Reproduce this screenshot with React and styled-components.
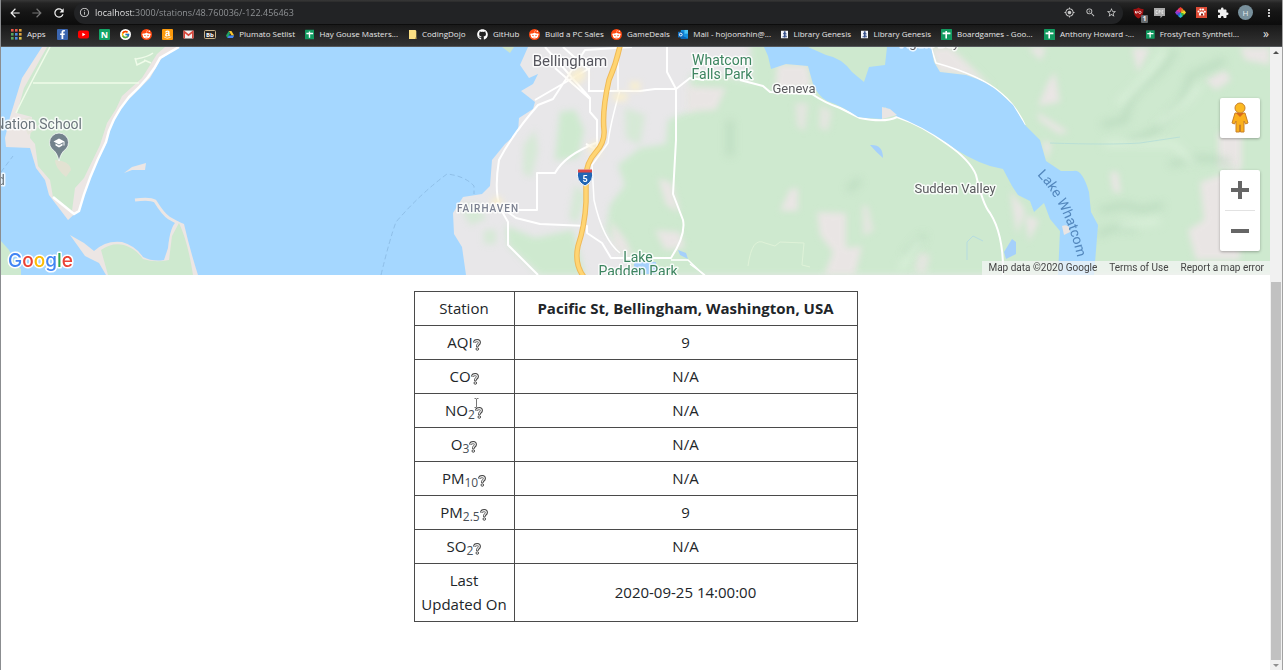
import React from "react";
import styled, { createGlobalStyle, css } from "styled-components";
import {
  MdArrowBack, MdArrowForward, MdRefresh, MdInfoOutline, MdZoomIn, MdStarBorder,
  MdMyLocation, MdExtension, MdMoreVert, MdSchool,
} from "react-icons/md";
import { FaGithub, FaRedditAlien, FaFacebookF, FaAmazon } from "react-icons/fa";
import { FcGoogle } from "react-icons/fc";

const ui = `"Open Sans", "Noto Sans", sans-serif`;

const GlobalStyle = createGlobalStyle`
  * { box-sizing: border-box; }
  body { margin: 0; background: #fff; color: #212529; font-family: ${ui}; }
  button { border: 0; padding: 0; background: none; color: inherit; font: inherit; cursor: pointer; }
  a { color: inherit; text-decoration: none; }
`;

const Browser = styled.div`
  display: flex;
  flex-direction: column;
  min-height: 100vh;
  border-left: 1px solid #8b8d90;
  border-right: 1px solid #a2a2a2;
`;

/* ---------- Toolbar ---------- */

const Toolbar = styled.header`
  display: flex;
  align-items: center;
  height: 25px;
  padding: 0 8px 0 7px;
  background: linear-gradient(#383838, #242424 3px, #151515 12px, #0c0c0c);
  color: #f1f1f1;
`;

const NavButton = styled.button`
  display: flex;
  width: 14px;
  height: 14px;
  margin-right: 8px;
  align-items: center;
  justify-content: center;
  font-size: 14px;
  color: ${(p) => (p.$dim ? "#777" : "#f1f1f1")};
`;

const AddressBar = styled.div`
  display: flex;
  flex: 1;
  align-items: center;
  gap: 5px;
  height: 22px;
  padding: 0 6px 0 5px;
  border-radius: 11px;
  background: #222325;
  color: #c8c8c8;
  font-size: 11px;
`;

const UrlInput = styled.input`
  flex: 1;
  min-width: 0;
  height: 20px;
  padding: 0;
  border: 0;
  outline: 0;
  font: 9px/20px ${ui};
  color: transparent;
  background: linear-gradient(90deg, #f2f2f2 39px, #94979a 39px);
  background-clip: text;
  -webkit-background-clip: text;
`;

const BarButton = styled.button`
  display: flex;
  width: 11px;
  height: 11px;
  margin-left: 5px;
  align-items: center;
  justify-content: center;
  font-size: 11px;
`;

const Extensions = styled.div`
  display: flex;
  align-items: center;
  gap: 10px;
  margin-left: 10px;
`;

const ExtButton = styled.button`
  display: flex;
  position: relative;
  width: 11px;
  height: 12px;
  align-items: center;
  justify-content: center;
  font-size: 12px;
  svg { flex: none; }
`;

const Count = styled.span`
  position: absolute;
  right: -4px;
  bottom: -4px;
  width: 7px;
  height: 8px;
  border-radius: 1px;
  background: #666a6d;
  font-size: 7px;
  font-weight: 700;
  line-height: 8px;
`;

const Avatar = styled.button`
  width: 15px;
  height: 15px;
  border-radius: 50%;
  background: #78909c;
  color: #e4eaed;
  font-size: 8px;
  line-height: 15px;
`;

/* ---------- Bookmarks ---------- */

const Bookmarks = styled.nav`
  display: flex;
  align-items: center;
  gap: 10px;
  height: 22px;
  padding: 0 13px 3px 10px;
  overflow: hidden;
  border-bottom: 1px solid #55585c;
  background: linear-gradient(#191919, #333);
  color: #e6e6e6;
`;

const Bookmark = styled.a`
  display: flex;
  flex: none;
  align-items: center;
  gap: 5px;
  font-size: 8px;
  line-height: 12px;
  white-space: nowrap;
  ${(p) => p.$w && css`width: ${p.$w}px;`}
`;

const More = styled.button`
  margin-left: auto;
  font-size: 12px;
  line-height: 12px;
`;

const Tile = styled.span`
  display: flex;
  flex: none;
  width: 11px;
  height: 11px;
  align-items: center;
  justify-content: center;
  overflow: hidden;
  border-radius: ${(p) => (p.$round ? "50%" : "1px")};
  background: ${(p) => p.$bg || "transparent"};
  color: #fff;
  font-size: ${(p) => p.$size || 9}px;
  font-weight: 700;
  line-height: 11px;
`;

const AppsIcon = () => (
  <svg width="11" height="11" viewBox="0 0 11 11" aria-hidden="true">
    {["#e8574a", "#e8574a", "#e0a33c", "#58a55c", "#4d8ce0", "#e0a33c", "#58a55c", "#4d8ce0", "#d8c24c"].map((c, i) => (
      <rect key={i} x={(i % 3) * 4} y={Math.floor(i / 3) * 4} width="2.6" height="2.6" fill={c} />
    ))}
  </svg>
);
const YoutubeIcon = () => (
  <svg width="11" height="11" viewBox="0 0 11 11"><rect y="1.5" width="11" height="8" rx="2" fill="#f00" /><path d="M4.4 3.8v3.4l3-1.7z" fill="#fff" /></svg>
);
const MailIcon = () => (
  <svg width="11" height="11" viewBox="0 0 11 11"><rect x=".5" y="1.5" width="10" height="8" rx="1" fill="#f3eeee" /><path d="M1.2 9.5V2.6l4.3 3.5 4.3-3.5v6.9" fill="none" stroke="#d9453a" strokeWidth="1.6" /></svg>
);
const DriveIcon = () => (
  <svg width="11" height="11" viewBox="0 0 11 11"><path d="M3.7.8h3.6L11 7H7.4z" fill="#fbc72d" /><path d="M3.7.8L0 7l1.8 3.2L5.5 4z" fill="#1fa463" /><path d="M1.8 10.2L3.6 7H11l-1.8 3.2z" fill="#4387f5" /></svg>
);
const SheetIcon = () => (
  <svg width="11" height="11" viewBox="0 0 11 11"><rect width="11" height="11" rx=".6" fill="#129a60" /><path d="M1.6 4.4h7.8M5.2 2v7.4" stroke="#fff" strokeWidth="1.6" /></svg>
);
const FolderIcon = () => (
  <svg width="9" height="11" viewBox="0 0 9 11"><path d="M1 1h6.5l.8 1v8H1z" fill="#fbdf83" /><path d="M7 8.6h1.3V10H7z" fill="#c9a64c" /></svg>
);
const OutlookIcon = () => (
  <svg width="11" height="11" viewBox="0 0 11 11"><path d="M3 .6h8V10H3z" fill="#1490df" /><path d="M7 .6h4v4H7z" fill="#50c6f5" /><path d="M3 6l8 4H3z" fill="#0a64b8" /><rect y="2.6" width="6" height="6" fill="#0f6cbd" /><circle cx="3" cy="5.6" r="1.5" fill="none" stroke="#fff" /></svg>
);
const LibraryIcon = () => (
  <svg width="11" height="11" viewBox="0 0 11 11"><path d="M0 0h11v11H0z" fill="#f5f7fb" /><path d="M4 2h3M3 4.3h5M4 6.4h4M2.3 8.8h6.4M5.5.8V10" stroke="#24407f" strokeWidth="1.4" /></svg>
);
const ShieldIcon = () => (
  <svg width="11" height="12" viewBox="0 0 11 12"><path d="M5.5.5C7 1.6 8.7 2 10.5 2c0 4.5-1 7.500-5 9.500C1.500 9.500.5 6.500.5 2 2.300 2 4 1.600 5.500.5z" fill="#a01212" /><path d="M2.500 4v2h1.600V4M6.800 4.200a1.200 1.200 0 1 0 .1 0" stroke="#fff" strokeWidth=".8" fill="none" /></svg>
);
const ChatIcon = () => (
  <svg width="11" height="12" viewBox="0 0 11 12"><path d="M0 1h11v8H8.500l-2 2.200V9H0z" fill="#aaa" /><path d="M2 3.500h1.700M2 3.500v3h1.700M5 6.500v-3h1.200v1.400H5M9.300 3.500H7.900v3h1.400M8 5h1" stroke="#eee" strokeWidth=".7" fill="none" /></svg>
);
const WheelIcon = () => (
  <svg width="11" height="11" viewBox="-5.500 -5.500 11 11">
    {["#f03b2e", "#ef8b1f", "#f2db2c", "#3fb83e", "#2bb9c9", "#2a62dd", "#8d3ad0", "#e13c9c"].map((c, i) => (
      <path key={c} d={i % 2 ? "M0 0L-2-4H2z" : "M0 0L-2-4L0-5.500L2-4z"} fill={c} transform={`rotate(${i * 45})`} />
    ))}
  </svg>
);
const PawIcon = () => (
  <svg width="11" height="11" viewBox="0 0 11 11"><path d="M0 0h11v11H0z" fill="#dd4b36" /><g fill="#fff"><circle cx="2.500" cy="4.500" r="1" /><circle cx="4.500" cy="2.500" r="1.100" /><circle cx="7" cy="2.600" r="1.100" /><circle cx="8.900" cy="4.700" r="1" /><path d="M5.700 4.500c2 0 3 2 2.600 4H3c-.6-2 .7-4 2.700-4z" /></g><path d="M5 6.500h2v2H5z" fill="#7b2018" /></svg>
);
const Reddit = () => <Tile $round $bg="#ff4a12"><FaRedditAlien /></Tile>;

const bookmarks = [
  { name: "Apps", text: "Apps", icon: <AppsIcon />, w: 36 },
  { name: "Facebook", icon: <Tile $bg="#3b66b0"><FaFacebookF /></Tile> },
  { name: "YouTube", icon: <YoutubeIcon /> },
  { name: "Notes", icon: <Tile $bg="#12a566">N</Tile> },
  { name: "Google", icon: <Tile $round $bg="#fff"><FcGoogle /></Tile> },
  { name: "Reddit", icon: <Reddit /> },
  { name: "Amazon", icon: <Tile $bg="#fd9a0b"><FaAmazon /></Tile> },
  { name: "Gmail", icon: <MailIcon /> },
  { name: "Blackboard", w: 12, icon: <svg width="12" height="11" viewBox="0 0 12 11"><rect x=".5" y="1.500" width="11" height="8" rx="1" fill="#292420" stroke="#c8b48a" /><text x="6" y="7.800" textAnchor="middle" fontSize="6" fontWeight="700" fill="#fff">Bb</text></svg> },
  { name: "Plumato Setlist", text: "Plumato Setlist", icon: <DriveIcon />, w: 69 },
  { name: "Masters", text: "Hay Gouse Masters...", icon: <SheetIcon />, w: 93 },
  { name: "CodingDojo", text: "CodingDojo", icon: <FolderIcon />, w: 59 },
  { name: "GitHub", text: "GitHub", icon: <Tile $size={11}><FaGithub /></Tile>, w: 42 },
  { name: "Build a PC Sales", text: "Build a PC Sales", icon: <Reddit />, w: 72 },
  { name: "GameDeals", text: "GameDeals", icon: <Reddit />, w: 57 },
  { name: "Mail", text: "Mail - hojoonshin@...", icon: <OutlookIcon />, w: 93 },
  { name: "Library", text: "Library Genesis", icon: <LibraryIcon />, w: 70 },
  { name: "Library 2", text: "Library Genesis", icon: <LibraryIcon />, w: 70 },
  { name: "Boardgames", text: "Boardgames - Goo...", icon: <SheetIcon />, w: 93 },
  { name: "Howard", text: "Anthony Howard -...", icon: <SheetIcon />, w: 92 },
  { name: "FrostyTech", text: "FrostyTech Syntheti...", icon: <SheetIcon />, w: 93 },
];

/* ---------- Viewport ---------- */

const Viewport = styled.div`
  display: flex;
  flex: 1;
`;

const Page = styled.main`
  flex: 1;
  min-width: 0;
`;

const Scrollbar = styled.div`
  display: flex;
  flex-direction: column;
  width: 12px;
  padding: 0 1px;
  background: #f1f1f1;
`;

const ScrollArrow = styled.span`
  display: flex;
  height: 10px;
  align-items: center;
  justify-content: center;
`;
const ScrollGap = styled.div`flex: 225;`;
const Thumb = styled.div`
  flex: 378;
  background: #c1c1c1;
`;

/* ---------- Map ---------- */

const MapFrame = styled.section`
  position: relative;
  height: 228px;
  overflow: hidden;
  background: #a5d7ff;
`;

const MapCanvas = styled.svg`
  display: block;
  width: 100%;
  height: 100%;
  font-family: Roboto, sans-serif;
`;

const MapControls = styled.div`
  position: absolute;
  top: 51px;
  right: 10px;
  display: flex;
  flex-direction: column;
  gap: 32px;
`;

const ControlCard = styled.div`
  display: flex;
  flex-direction: column;
  align-items: center;
  width: 40px;
  border-radius: 2px;
  background: #fff;
  box-shadow: 0 1px 3px rgba(0, 0, 0, 0.3);
`;

const ControlButton = styled.button`
  display: flex;
  width: 40px;
  height: 40px;
  align-items: center;
  justify-content: center;
`;

const Rule = styled.span`
  width: 30px;
  height: 1px;
  background: #e2e2e2;
`;

const Attribution = styled.footer`
  position: absolute;
  right: 0;
  bottom: 0;
  display: flex;
  gap: 12px;
  height: 14px;
  padding: 0 6px;
  background: rgba(245, 245, 245, 0.72);
  color: #444;
  font: 10px/14px Roboto, sans-serif;
  white-space: nowrap;
`;

const Halo = ({ size = 14, fill = "#5a5a5e", weight = 400, children, ...rest }) => (
  <text fontSize={size} fill={fill} fontWeight={weight} stroke="#fff" strokeOpacity=".8" strokeWidth="3" strokeLinejoin="round" paintOrder="stroke" textAnchor="middle" {...rest}>
    {children}
  </text>
);

const LAND = "M528 47L520 65L529 78L538 74L533 84L521 91L535 102L533 109L519 118L518 132L505 144L492 160L490 186L482 194L463 197L453 213L454 234L462 247L466 275H1270V47Z";
const LAKE = "M764 47L768 56L771 69L786 64L808 66L813 84Q818 96 827 101Q842 106 858 117L866 118L882 119L885 107L896 116Q922 126 947 143Q966 158 990 166L1003 169L1012 186L1018 195L1030 201L1034 212L1044 203L1050 219L1060 231L1058 275H1094L1098 225L1091 212L1089 192Q1082 168 1073 171L1061 171L1046 161L1040 140L1025 125L1013 105L1000 93Q988 82 966 75L940 72L934 62L931 47H887L885 65L869 67L864 82L852 72Q842 58 826 55L808 47Z";

function StationMap() {
  return (
    <MapCanvas viewBox="1 47 1269 228" preserveAspectRatio="xMidYMid slice" role="img" aria-label="Map of Bellingham">
      <defs>
        <filter id="soft" x="-20%" y="-20%" width="140%" height="140%"><feGaussianBlur stdDeviation="3" /></filter>
        <filter id="hill" x="-20%" y="-20%" width="140%" height="140%"><feGaussianBlur stdDeviation="4" /></filter>
        <clipPath id="land"><path d={LAND} /></clipPath>
      </defs>
      <rect x="1" y="47" width="1269" height="228" fill="#a5d7ff" />

      {/* west peninsula and islands */}
      <path d="M42 47L22 78L10 117L5 138L6 147L30 148L36 168L45 180L49 195L68 220L79 210L89 178L106 144L109 130L122 106L150 78L161 59L179 47Z" fill="#ece6e4" />
      <path d="M47 47L24 88L17 113L32 117L30 138L35 144L38 166L50 180L53 197L72 211L75 188L84 178L100 145L107 123L116 109L122 96L142 78L157 54L165 47Z" fill="#cee9cf" />
      <path d="M22 119L30 117L38 127L28 135Z" fill="#e6e6dc" />
      <path d="M55 160Q70 161 71 170L66 177Q55 168 55 160Z" fill="#e2e2d2" />
      <path d="M179 47L160 58Q151 77 129 97Q110 120 106 142Q88 178 79 211L74 214L53 197" fill="none" stroke="#fff" strokeWidth="2.500" />
      <path d="M50 47Q28 88 16 113M33 83H139M136 59q12-2 17-6m-9 7l7 3m-16-5l2 7 8-4" fill="none" stroke="#effbe9" strokeWidth="1.500" />
      <path d="M124 173L132 167L146 163L145 170L132 170Z" fill="#ece6e4" />
      <path d="M135 200Q150 198 155 201Q163 214 169 218L178 223" fill="none" stroke="#ece6e4" strokeWidth="3" />
      <path d="M70 235L84 243L94 251Q106 240 122 242Q136 246 143 257Q153 262 164 260L168 248Q170 226 177 221L184 224Q190 250 198 275H106L99 263L85 256Z" fill="#ece6e4" />
      <path d="M101 250Q112 242 124 245Q135 248 143 259Q155 263 169 260L172 236L179 223Q188 242 193 275H108Z" fill="#cee9cf" />
      <path d="M0 240L9 250L15 263L21 269V275H0Z" fill="#cee9cf" />
      <path d="M1 172L13 156M381 275Q390 238 396 222Q420 194 447 174Q465 176 474 186V194" fill="none" stroke="#8fbfe8" strokeDasharray="5 3" />

      {/* mainland */}
      <path d={LAND} fill="#e8e7e9" />
      <path d="M502 47H514L510 53Z" fill="#cfe6cb" />
      <g clipPath="url(#land)">
        <g filter="url(#soft)" fill="#cee9cf">
          <path d="M560 112L575 110L584 130L578 158L555 160Z" />
          <path d="M524 145L535 130L538 150L531 178L523 172Z" opacity=".7" />
          <path d="M506 226L535 238L573 230L585 275H540L508 245Z" />
          <path d="M460 205h18l8 14-16 6zM484 230h12v14h-12z" opacity=".7" />
          <path d="M692 110L668 120L666 144L640 148L618 165L625 185L610 205L606 230L640 275H1280V40H750L752 82L720 75L690 75Z" />
          <path d="M625 108l20 7-5 30-14-7zM575 185l12 10-10 28-8-5z" opacity=".7" />
        </g>
        <g filter="url(#soft)" fill="#e9e5e4">
          <path d="M686 86L726 88L716 110L686 112Z" />
          <path d="M777 64H808L812 88L775 91Z" />
          <path d="M795 103h13l-3 28-8-4zM820 105l12 6-4 20-9-3z" opacity=".8" />
          <path d="M790 189L798 188V211H780Z" />
          <path d="M817 212L846 213L846 248L862 246L855 275H824L833 252L820 235Z" />
          <path d="M862 205l6 1 6 25-11 5zM918 252l12 3-4 19-12-3z" opacity=".8" />
          <path d="M658 178l14 5 8 30-14-8zM655 230l25 2 5 16-20 2zM610 220l16 20 8 20-20-12z" />
          <path d="M1048 82L1055 72L1060 102L1038 106ZM1037 112l32 20-10 2-20-14z" />
          <path d="M1042 140l10 4-6 18zM1010 190l15 20-8 25zM1025 215l14 5-10 22z" />
          <path d="M1110 172l8 0 3 22-8-3zM1205 80l20-10 6 10-15 10z" />
          <path d="M1218 132h24v36h-24zM1200 182L1240 168V260H1196L1188 230L1204 220Z" />
          <path d="M1240 47H1270V65L1245 60ZM1132 48h18l-12 25zM1028 47h18l-5 14z" />
          <path d="M930 47l20 0 24 22 18 18-25-11-30-3z" />
        </g>
        <g filter="url(#hill)" fill="none" stroke="#b4d6b9" strokeWidth="6" opacity=".7">
          <path d="M1175 50Q1165 70 1140 88Q1128 100 1125 120L1102 125M1128 140Q1155 138 1172 112Q1188 95 1190 76L1225 60M1170 165q30-12 60-2" />
          <path d="M1100 210l25-5 18 5 20-5M1098 235q20-12 38-5M730 120v36M860 180l-12 10M925 235l-20 20" />
        </g>
        <g filter="url(#hill)" fill="none" stroke="#daf0da" strokeWidth="6">
          <path d="M1165 50Q1145 80 1118 104M1158 124Q1185 105 1200 86M1104 144h70l20 20M1120 225l40-4M920 240l-20 30" />
        </g>
        <path d="M1050 143Q1110 145 1140 143L1180 137" fill="none" stroke="#b9dfd6" />
      </g>

      {/* local roads */}
      <g fill="none" stroke="#fff" strokeWidth="2" strokeLinejoin="round">
        <path d="M545 47L590 98V112L597 120V150L586 144M563 47L589 70V92M632 47L585 50L553 99L538 105Q512 135 499 160Q494 190 500 208L508 222V245L538 275M535 100L590 68M590 91H640L655 89H676L690 78L704 80M667 47V72L676 89V140L673 194L683 220Q686 235 671 258H611L602 243L587 233V226L540 224L516 218L505 210H537V173H555Q565 155 596 143M555 68L590 99" />
        <path d="M618 47V90M620 90Q610 125 608 143L592 165L594 200Q603 240 620 253M671 260H688L704 275" strokeWidth="1.500" />
        <path d="M740 80L763 86L770 92L812 94Q825 103 840 108L860 118Q885 123 897 117Q922 125 947 144Q970 160 976 175Q983 205 990 213Q1004 235 1003 275" />
        <path d="M690 264L705 275M931 47L936 63Q980 75 1001 93Q1015 104 1025 125" strokeWidth="1.500" />
        <path d="M748 266q4-30 17-23l10 3 5-4 24 1-2 22 8 2" stroke="#dff2d8" strokeWidth="1" />
      </g>
      <g fill="#f9efcf" filter="url(#soft)"><path d="M568 75l12-8 7 8-9 10zM590 144l9-3 1 15-12-2zM612 93l16 0-2 8h-12zM630 82h10v8h-10zM492 198h10v9h-10z" /></g>
      <path d="M620 46Q616 64 609 80Q602 110 604 130Q605 142 596 152Q586 163 586 177V202Q585 225 578 246Q574 264 584 277" fill="none" stroke="#efb957" strokeWidth="5.500" />
      <path d="M620 46Q616 64 609 80Q602 110 604 130Q605 142 596 152Q586 163 586 177V202Q585 225 578 246Q574 264 584 277" fill="none" stroke="#ffd573" strokeWidth="3.500" />

      {/* lakes */}
      <path d={LAKE} fill="#a5d7ff" />
      <path d="M1062 226q8-3 8 6l-6 3zM882 107l8 2 7 6-15 4z" fill="#e9e5e4" />
      <path d="M870 145Q883 144 883 158Q876 152 870 145ZM1004 252l8-13 4 3v12l-10 5zM678 250l8 3 2 6-8-4zM634 262h22v12h-22z" fill="#a5d0fb" />
      <path d="M967 260v-18l6-6 10 5" fill="none" stroke="#b5dbe0" />

      {/* highway shield */}
      <path d="M578 170h14q3 11-7 16q-10-5-7-16z" fill="#2065b5" stroke="#fff" />
      <path d="M578 169.500h14v3h-14z" fill="#d84747" />
      <text x="585" y="182" fontSize="9" fontWeight="700" fill="#fff" textAnchor="middle">5</text>

      {/* place labels */}
      <Halo x="570" y="66" size={15} fill="#56565e">Bellingham</Halo>
      <Halo x="488" y="212" size={10} weight={500} fill="#7b8090" letterSpacing="1">FAIRHAVEN</Halo>
      <Halo x="722" y="65" fill="#3d8560">Whatcom</Halo>
      <Halo x="722" y="79" fill="#3d8560">Falls Park</Halo>
      <Halo x="638" y="262" fill="#3d8560">Lake</Halo>
      <Halo x="638" y="276" fill="#3d8560">Padden Park</Halo>
      <Halo x="794" y="93" size={13}>Geneva</Halo>
      <Halo x="955" y="193" size={13}>Sudden Valley</Halo>
      <Halo x="930" y="47" size={13}>Agate Bay</Halo>
      <Halo x="82" y="129" size={14} fill="#6b757c" textAnchor="end">Nation School</Halo>
      <Halo x="5" y="185" size={14} fill="#6b757c" textAnchor="end">d</Halo>
      <path id="lakeLine" d="M1037 175Q1065 202 1079 264" fill="none" />
      <text fontSize="14" fill="#5387bd"><textPath href="#lakeLine">Lake Whatcom</textPath></text>

      {/* school pin */}
      <path d="M59 161Q57 152 52 149A9.500 9.500 0 1 1 66 149Q61 152 59 161Z" fill="#73828c" stroke="#fff" strokeWidth=".7" />
      <MdSchool x="53" y="137" size={12} color="#fff" />

      <text x="8" y="267" fontFamily="Inter, sans-serif" fontSize="19" fontWeight="500" stroke="#fff" strokeWidth="3" strokeLinejoin="round" paintOrder="stroke">
        <tspan fill="#4285f4">G</tspan><tspan fill="#ea4335">o</tspan><tspan fill="#fbbc05">o</tspan><tspan fill="#4285f4">g</tspan><tspan fill="#34a853">l</tspan><tspan fill="#ea4335">e</tspan>
      </text>
    </MapCanvas>
  );
}

/* ---------- Readings ---------- */

const Readings = styled.table`
  width: 444px;
  max-width: 100%;
  margin: 16px auto 48px;
  border-collapse: collapse;
  table-layout: fixed;
  font-size: 15px;
  line-height: 24px;
  text-align: center;
`;

const cell = css`
  padding: 4px 5px 5px;
  border: 1px solid #4a4a4a;
`;
const NameCell = styled.th`
  ${cell}
  position: relative;
  width: 100px;
  font-weight: 400;
`;
const ValueCell = styled.td`
  ${cell}
  font-weight: ${(p) => (p.$strong ? 700 : 400)};
`;

const Sub = styled.sub`
  color: #495057;
  font-size: 12px;
  line-height: 0;
  vertical-align: -3px;
`;

const HelpButton = styled.button`
  width: 8px;
  height: 12px;
  line-height: 0;
  vertical-align: -3px;
`;

const Pointer = styled.svg`
  position: absolute;
  top: 4px;
  left: 58px;
  pointer-events: none;
`;

const HelpIcon = () => (
  <svg width="8" height="12" viewBox="0 0 8 12" fill="none">
    <path d="M1.400 3.600Q1.600 1.500 4.200 1.500Q6.600 1.700 6.500 3.700Q6.300 5 5 5.800Q4.300 6.300 4.400 7.800" stroke="#444" strokeWidth="2.800" />
    <path d="M1.400 3.200Q2.200 1.600 4.200 1.600Q6.400 1.800 6.300 3.700Q6 4.900 4.900 5.600Q4.200 6.200 4.300 7.400" stroke="#f2f2f2" strokeWidth="1.200" />
    <circle cx="4.300" cy="10" r="1.300" fill="#eee" stroke="#444" strokeWidth=".9" />
  </svg>
);

const readings = [
  { name: "AQI", value: "9" },
  { name: "CO", value: "N/A" },
  { name: "NO", sub: "2", value: "N/A", pointer: true },
  { name: "O", sub: "3", value: "N/A" },
  { name: "PM", sub: "10", value: "N/A" },
  { name: "PM", sub: "2.5", value: "9" },
  { name: "SO", sub: "2", value: "N/A" },
];

export default function App() {
  return (
    <>
      <GlobalStyle />
      <Browser>
        <Toolbar>
          <NavButton aria-label="Back"><MdArrowBack /></NavButton>
          <NavButton $dim aria-label="Forward"><MdArrowForward /></NavButton>
          <NavButton aria-label="Reload"><MdRefresh /></NavButton>
          <AddressBar>
            <MdInfoOutline />
            <UrlInput aria-label="Address" defaultValue="localhost:3000/stations/48.760036/-122.456463" />
            <BarButton aria-label="Location"><MdMyLocation /></BarButton>
            <BarButton aria-label="Zoom"><MdZoomIn /></BarButton>
            <BarButton aria-label="Bookmark this page"><MdStarBorder /></BarButton>
          </AddressBar>
          <Extensions>
            <ExtButton aria-label="Blocker"><ShieldIcon /><Count>1</Count></ExtButton>
            <ExtButton aria-label="Chat"><ChatIcon /></ExtButton>
            <ExtButton aria-label="Colour wheel"><WheelIcon /></ExtButton>
            <ExtButton aria-label="Paw"><PawIcon /></ExtButton>
            <ExtButton aria-label="Extensions"><MdExtension /></ExtButton>
            <Avatar aria-label="Profile">H</Avatar>
            <ExtButton aria-label="Menu"><MdMoreVert /></ExtButton>
          </Extensions>
        </Toolbar>
        <Bookmarks aria-label="Bookmarks">
          {bookmarks.map((b) => (
            <Bookmark key={b.name} href="#" $w={b.w} aria-label={b.text ? undefined : b.name}>
              {b.icon}
              {b.text}
            </Bookmark>
          ))}
          <More aria-label="More bookmarks">»</More>
        </Bookmarks>
        <Viewport>
          <Page>
            <MapFrame>
              <StationMap />
              <MapControls>
                <ControlCard>
                  <ControlButton aria-label="Street View">
                    <svg width="18" height="32" viewBox="0 0 18 32">
                      <path d="M4 11h10l3 10-2.500 1-1.500-3v11H9.500v-7h-1v7H5V19l-1.500 3L1 21z" fill="#fbb01c" stroke="#c8812a" />
                      <path d="M5 11h8l-4 4z" fill="#d9681a" />
                      <circle cx="9" cy="6" r="5" fill="#fbb922" stroke="#c8812a" />
                    </svg>
                  </ControlButton>
                </ControlCard>
                <ControlCard>
                  <ControlButton aria-label="Zoom in">
                    <svg width="18" height="18"><path d="M0 9h18M9 0v18" stroke="#666" strokeWidth="4" /></svg>
                  </ControlButton>
                  <Rule />
                  <ControlButton aria-label="Zoom out">
                    <svg width="18" height="18"><path d="M0 9h18" stroke="#666" strokeWidth="4" /></svg>
                  </ControlButton>
                </ControlCard>
              </MapControls>
              <Attribution>
                <span>Map data ©2020 Google</span>
                <a href="#terms">Terms of Use</a>
                <a href="#report">Report a map error</a>
              </Attribution>
            </MapFrame>
            <Readings>
              <tbody>
                <tr>
                  <NameCell scope="row">Station</NameCell>
                  <ValueCell $strong>Pacific St, Bellingham, Washington, USA</ValueCell>
                </tr>
                {readings.map((r) => (
                  <tr key={r.name + (r.sub || "")}>
                    <NameCell scope="row">
                      {r.name}
                      {r.sub && <Sub>{r.sub}</Sub>}
                      <HelpButton aria-label={`About ${r.name}${r.sub || ""}`}><HelpIcon /></HelpButton>
                      {r.pointer && (
                        <Pointer width="7" height="10" viewBox="0 0 7 10" fill="none" stroke="#777">
                          <path d="M1.500.5h1.500l.5.500.5-.5h1.500M3.500 1v8M1.500 9.500h1.500l.5-.5.5.5h1.500" />
                        </Pointer>
                      )}
                    </NameCell>
                    <ValueCell>{r.value}</ValueCell>
                  </tr>
                ))}
                <tr>
                  <NameCell scope="row">Last Updated On</NameCell>
                  <ValueCell>2020-09-25 14:00:00</ValueCell>
                </tr>
              </tbody>
            </Readings>
          </Page>
          <Scrollbar aria-hidden="true">
            <ScrollArrow><svg width="6" height="3"><path d="M0 3l3-3 3 3z" fill="#505050" /></svg></ScrollArrow>
            <ScrollGap />
            <Thumb />
            <ScrollArrow><svg width="6" height="3"><path d="M0 0l3 3 3-3z" fill="#909090" /></svg></ScrollArrow>
          </Scrollbar>
        </Viewport>
      </Browser>
    </>
  );
}
